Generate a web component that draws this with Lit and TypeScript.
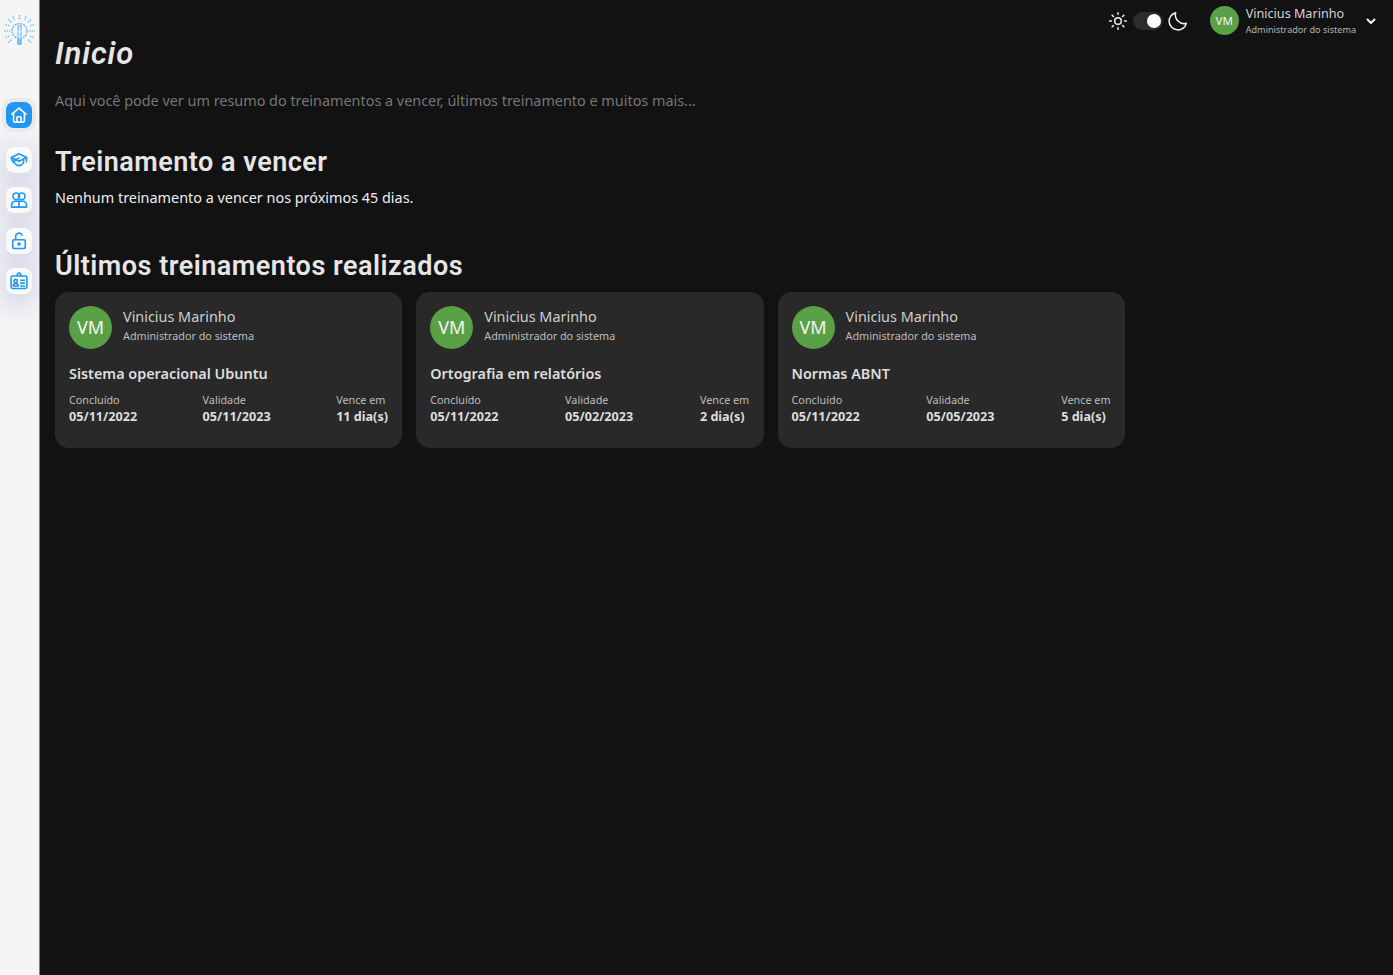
import { LitElement, html, css, svg } from 'lit'
import { customElement } from 'lit/decorators.js'

type Training = { title: string; done: string; valid: string; left: string }

const trainings: Training[] = [
  { title: 'Sistema operacional Ubuntu', done: '05/11/2022', valid: '05/11/2023', left: '11 dia(s)' },
  { title: 'Ortografia em relatórios', done: '05/11/2022', valid: '05/02/2023', left: '2 dia(s)' },
  { title: 'Normas ABNT', done: '05/11/2022', valid: '05/05/2023', left: '5 dia(s)' },
]

const navIcons = [
  svg`<path d="M3.500 11 12 3.800 20.500 11"/><path d="M5.500 9.500V19a1.500 1.500 0 0 0 1.500 1.500h10a1.500 1.500 0 0 0 1.500-1.500V9.500"/><path d="M9.500 20.500V15a1 1 0 0 1 1-1h3a1 1 0 0 1 1 1v5.500"/>`,
  svg`<path d="M12 4.500 3 9l9 4.500L21 9z"/><path d="M6.500 11v4.500c1.500 2.200 3.500 3.200 5.500 3.200s4-1 5.500-3.200V11"/><path d="M3 9c0 3 1 5 3.500 6.500M21 9v5"/><path d="M7 12.500 12 9.500"/>`,
  svg`<circle cx="8.700" cy="7.500" r="4"/><circle cx="15.300" cy="7.500" r="4"/><path d="M3 20.500v-2.500a4.500 4.500 0 0 1 4.500-4.500h9a4.500 4.500 0 0 1 4.500 4.500v2.500z"/><path d="M12 13.500v7"/>`,
  svg`<rect x="4.500" y="10.500" width="15" height="10.500" rx="1.500"/><path d="M8 10.500V6.500a4 4 0 0 1 7.600-1.600"/><circle cx="12" cy="15.700" r="1.200" fill="currentColor"/>`,
  svg`<rect x="2.500" y="6" width="19" height="15" rx="2"/><path d="M10 6V4.500a2 2 0 0 1 4 0V6"/><circle cx="8" cy="12" r="2"/><path d="M5 18c0-2 1.200-3 3-3s3 1 3 3z"/><path d="M14 11h4.500M14 14.500h4.500M14 18h4.500"/>`,
]

@customElement('app-root')
export class AppRoot extends LitElement {
  static styles = css`
    :host {
      display: block;
      font-family: 'Noto Sans', sans-serif;
      color: #f2f2f2;
    }

    .app {
      display: flex;
      min-height: 975px;
      background: #121212;
    }

    .sidebar {
      width: 39px;
      flex: none;
      background: #f5f5f5;
      border-right: 1px solid #2196f3;
      display: flex;
      flex-direction: column;
      align-items: center;
      overflow: hidden;
    }

    .logo {
      width: 32px;
      height: 32px;
      margin-top: 15px;
      color: #56aef2;
    }

    .nav {
      margin: 55px 1px 0 0;
      display: flex;
      flex-direction: column;
      align-items: center;
      gap: 14.400px;
    }

    .nav-item {
      width: 26px;
      height: 26px;
      border-radius: 8px;
      background: #fafafa;
      color: #2196f3;
      display: flex;
      align-items: center;
      justify-content: center;
      box-shadow: 0 6px 22px 8px rgba(190, 190, 225, 0.45);
    }

    .nav-item svg {
      width: 20px;
      height: 20px;
      fill: none;
      stroke: currentColor;
      stroke-width: 1.900;
      stroke-linecap: round;
      stroke-linejoin: round;
    }

    .nav-item.active {
      background: #2196f3;
      color: #fff;
      box-shadow: 0 0 0 4px #e9e9ec;
      margin-bottom: 4.500px;
      position: relative;
      z-index: 1;
    }

    .main {
      flex: 1;
      min-width: 0;
      padding: 0 16px 0 15px;
    }

    .topbar {
      height: 38px;
      display: flex;
      justify-content: flex-end;
      align-items: flex-start;
      padding-top: 4.500px;
      box-sizing: border-box;
    }

    .theme {
      display: flex;
      align-items: center;
      gap: 5px;
      margin: 6.500px 22px 0 0;
    }

    .theme svg {
      width: 20px;
      height: 20px;
      fill: none;
      stroke: #f2f2f2;
      stroke-width: 1.800;
      stroke-linecap: round;
      stroke-linejoin: round;
    }

    .switch {
      width: 30px;
      height: 18px;
      border-radius: 9px;
      background: #2c2c2c;
      display: flex;
      justify-content: flex-end;
      align-items: center;
      padding-right: 2px;
      box-sizing: border-box;
    }

    .knob {
      width: 14px;
      height: 14px;
      border-radius: 50%;
      background: #fff;
    }

    .account {
      display: flex;
      align-items: center;
      gap: 7px;
    }

    .avatar {
      border-radius: 50%;
      background: #5aa046;
      color: #f4f4f4;
      display: flex;
      align-items: center;
      justify-content: center;
      flex: none;
    }

    .account .avatar {
      width: 29px;
      height: 29px;
      font-size: 11.500px;
    }

    .account-name {
      font-size: 12.600px;
      line-height: 17px;
      color: #d6d6d6;
    }

    .account-role {
      font-size: 9.100px;
      line-height: 15px;
      color: #b4b4b4;
    }

    .chevron {
      width: 12px;
      height: 12px;
      margin-left: 2px;
      fill: none;
      stroke: #f2f2f2;
      stroke-width: 2;
      stroke-linecap: round;
      stroke-linejoin: round;
    }

    h1,
    h2 {
      font-family: Roboto, sans-serif;
      margin: 0;
      color: #e6e6e6;
    }

    h1 {
      font-size: 31px;
      line-height: 32px;
      font-style: italic;
      font-weight: 600;
      letter-spacing: 0.900px;
    }

    .lead {
      margin: 21px 0 0;
      font-size: 14.400px;
      line-height: 20px;
      color: #777;
    }

    h2 {
      font-size: 27px;
      line-height: 32px;
      font-weight: 600;
      letter-spacing: 0.500px;
    }

    .due {
      margin-top: 35px;
    }

    .empty {
      margin: 10px 0 0;
      font-size: 14.400px;
      line-height: 20px;
      color: #eee;
    }

    .recent {
      margin-top: 42px;
      width: 1070px;
    }

    .cards {
      margin-top: 10px;
      display: grid;
      grid-template-columns: repeat(3, 1fr);
      gap: 13.800px;
    }

    .card {
      background: #292929;
      border-radius: 14px;
      height: 156px;
      padding: 14px 14.500px 14px 14px;
      box-sizing: border-box;
    }

    .person {
      display: flex;
      align-items: center;
      gap: 11px;
    }

    .person .avatar {
      width: 43px;
      height: 43px;
      font-size: 18px;
      padding-bottom: 1px;
      box-sizing: border-box;
    }

    .person-text {
      padding-bottom: 5px;
    }

    .person-name {
      font-size: 14.400px;
      line-height: 22px;
      color: #cfcfcf;
    }

    .person-role {
      font-size: 10.800px;
      line-height: 16px;
      color: #bdbdbd;
    }

    .title {
      margin-top: 15px;
      font-size: 14.400px;
      line-height: 20px;
      font-weight: 600;
      color: #dedede;
    }

    .facts {
      margin-top: 8px;
      display: flex;
      justify-content: space-between;
    }

    .fact-label {
      font-size: 10.800px;
      line-height: 15px;
      color: #bdbdbd;
    }

    .fact-value {
      font-size: 12.600px;
      line-height: 19px;
      font-weight: 700;
      color: #dedede;
    }
  `

  private _avatarCard(t: Training) {
    return html`
      <div class="card">
        <div class="person">
          <div class="avatar">VM</div>
          <div class="person-text">
            <div class="person-name">Vinicius Marinho</div>
            <div class="person-role">Administrador do sistema</div>
          </div>
        </div>
        <div class="title">${t.title}</div>
        <div class="facts">
          <div><div class="fact-label">Concluído</div><div class="fact-value">${t.done}</div></div>
          <div><div class="fact-label">Validade</div><div class="fact-value">${t.valid}</div></div>
          <div><div class="fact-label">Vence em</div><div class="fact-value">${t.left}</div></div>
        </div>
      </div>
    `
  }

  render() {
    return html`
      <div class="app">
        <aside class="sidebar">
          <svg class="logo" viewBox="0 0 32 32" fill="none" stroke="currentColor" stroke-width="1.200">
            <circle cx="15.500" cy="16" r="7.500" stroke-dasharray="2 1" />
            <path d="M13 9.500h5v10l-1 4h-3l-1-4z" fill="#9fd0f7" stroke="none" />
            <path d="M13 24h5v4.500l-1 1.500h-3l-1-1.500z" fill="#7cc0f5" stroke="none" />
            <path d="M15.500 12v12M11.500 14l4 4 4-4" stroke="#fff" stroke-width="0.800" />
            <path
              stroke-dasharray="1.500 1"
              d="M0 16h6M25 16h6M15.500 0v5M4.500 4.500l3.500 3.500M27 4.500l-3.500 3.500M4.500 27.500l3.500-3.500M27 27.500l-3.500-3.500M9 1.500l1.200 3.500M22 1.500l-1.200 3.500M1.500 9.500l3.500 1.200M30 9.500l-3.500 1.200M1.500 22.500l3.500-1.200M29.500 22.500l-3.500-1.200"
            />
          </svg>
          <nav class="nav">
            ${navIcons.map(
              (icon, i) => html`
                <div class="nav-item ${i === 0 ? 'active' : ''}">
                  <svg viewBox="0 0 24 24">${icon}</svg>
                </div>
              `,
            )}
          </nav>
        </aside>
        <main class="main">
          <header class="topbar">
            <div class="theme">
              <svg viewBox="0 0 24 24">
                <circle cx="12" cy="12" r="4" />
                <path d="M12 2v2M12 20v2M2 12h2M20 12h2M5 5l1.500 1.500M17.500 17.500 19 19M5 19l1.500-1.500M17.500 6.500 19 5" />
              </svg>
              <div class="switch"><div class="knob"></div></div>
              <svg viewBox="0 0 24 24"><path d="M22 14.800A10.500 10.500 0 0 1 9.200 2a10.500 10.500 0 1 0 12.800 12.800z" /></svg>
            </div>
            <div class="account">
              <div class="avatar">VM</div>
              <div>
                <div class="account-name">Vinicius Marinho</div>
                <div class="account-role">Administrador do sistema</div>
              </div>
              <svg class="chevron" viewBox="0 0 12 12"><path d="M2.500 4.500 6 8l3.500-3.500" /></svg>
            </div>
          </header>
          <h1>Inicio</h1>
          <p class="lead">Aqui você pode ver um resumo do treinamentos a vencer, últimos treinamento e muitos mais...</p>
          <section class="due">
            <h2>Treinamento a vencer</h2>
            <p class="empty">Nenhum treinamento a vencer nos próximos 45 dias.</p>
          </section>
          <section class="recent">
            <h2>Últimos treinamentos realizados</h2>
            <div class="cards">${trainings.map((t) => this._avatarCard(t))}</div>
          </section>
        </main>
      </div>
    `
  }
}

declare global {
  interface HTMLElementTagNameMap {
    'app-root': AppRoot
  }
}
